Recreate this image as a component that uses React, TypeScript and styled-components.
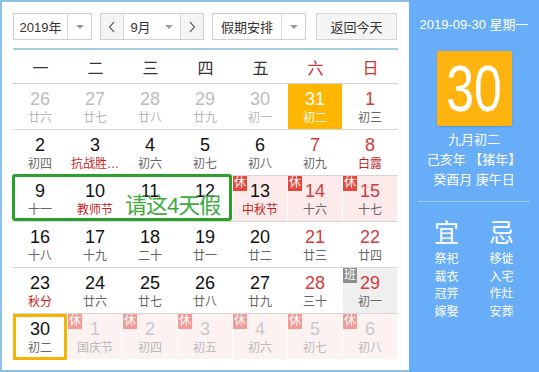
import * as React from "react";
import styled, { createGlobalStyle, css } from "styled-components";

const FONT = `"Liberation Sans", "Noto Sans CJK SC", sans-serif`;

const GlobalStyle = createGlobalStyle`
  body {
    margin: 0;
    background: #fff;
    font-family: ${FONT};
  }
`;

type Kind = "normal" | "other" | "hover" | "rest" | "restOther" | "work" | "today";

type Day = {
  d: number;
  l: string;
  kind?: Kind;
  red?: boolean; // weekend number colour
  fest?: boolean; // lunar line is a festival / solar term
};

const weeks: Day[][] = [
  [
    { d: 26, l: "廿六", kind: "other" },
    { d: 27, l: "廿七", kind: "other" },
    { d: 28, l: "廿八", kind: "other" },
    { d: 29, l: "廿九", kind: "other" },
    { d: 30, l: "初一", kind: "other" },
    { d: 31, l: "初二", kind: "hover" },
    { d: 1, l: "初三", red: true },
  ],
  [
    { d: 2, l: "初四" },
    { d: 3, l: "抗战胜…", fest: true },
    { d: 4, l: "初六" },
    { d: 5, l: "初七" },
    { d: 6, l: "初八" },
    { d: 7, l: "初九", red: true },
    { d: 8, l: "白露", red: true, fest: true },
  ],
  [
    { d: 9, l: "十一" },
    { d: 10, l: "教师节", fest: true },
    { d: 11, l: "" },
    { d: 12, l: "" },
    { d: 13, l: "中秋节", kind: "rest", fest: true },
    { d: 14, l: "十六", kind: "rest", red: true },
    { d: 15, l: "十七", kind: "rest", red: true },
  ],
  [
    { d: 16, l: "十八" },
    { d: 17, l: "十九" },
    { d: 18, l: "二十" },
    { d: 19, l: "廿一" },
    { d: 20, l: "廿二" },
    { d: 21, l: "廿三", red: true },
    { d: 22, l: "廿四", red: true },
  ],
  [
    { d: 23, l: "秋分", fest: true },
    { d: 24, l: "廿六" },
    { d: 25, l: "廿七" },
    { d: 26, l: "廿八" },
    { d: 27, l: "廿九" },
    { d: 28, l: "三十", red: true },
    { d: 29, l: "初一", kind: "work", red: true },
  ],
  [
    { d: 30, l: "初二", kind: "today" },
    { d: 1, l: "国庆节", kind: "restOther" },
    { d: 2, l: "初四", kind: "restOther" },
    { d: 3, l: "初五", kind: "restOther" },
    { d: 4, l: "初六", kind: "restOther" },
    { d: 5, l: "初七", kind: "restOther" },
    { d: 6, l: "初八", kind: "restOther" },
  ],
];

const weekdays = ["一", "二", "三", "四", "五", "六", "日"];

const Frame = styled.div`
  display: flex;
  width: 539px;
  height: 372px;
`;

const CalendarPane = styled.div`
  width: 409px;
  height: 372px;
  box-sizing: border-box;
  border: 2px solid #8cc0e4;
  border-right: none;
  padding: 11px 11px 0 11px;
`;

const Toolbar = styled.div`
  display: flex;
  height: 27px;
  font-size: 13px;
  color: #333;
`;

const Control = styled.div<{ $w: number; $ml?: number }>`
  display: flex;
  width: ${(p) => p.$w}px;
  margin-left: ${(p) => p.$ml || 0}px;
  height: 27px;
  box-sizing: border-box;
  border: 1px solid #cfcfcf;
  background: #fff;
`;

const Label = styled.div`
  flex: 1;
  display: flex;
  align-items: center;
  justify-content: center;
`;

const Arrow = styled.div<{ $line?: boolean }>`
  width: 23px;
  display: flex;
  align-items: center;
  justify-content: center;
  border-left: ${(p) => (p.$line ? "1px solid #dcdcdc" : "none")};
  &::after {
    content: "";
    border-left: 4px solid transparent;
    border-right: 4px solid transparent;
    border-top: 4px solid #9a9a9a;
  }
`;

const Nav = styled.div<{ $side: "l" | "r" }>`
  width: 22px;
  display: flex;
  align-items: center;
  justify-content: center;
  background: #f4f4f4;
  ${(p) => (p.$side === "l" ? "border-right: 1px solid #dcdcdc;" : "border-left: 1px solid #dcdcdc;")}
  svg {
    display: block;
  }
`;

const TodayButton = styled.div`
  margin-left: 10px;
  width: 81px;
  height: 27px;
  box-sizing: border-box;
  border: 1px solid #d4d4d4;
  background: #f5f5f5;
  display: flex;
  align-items: center;
  justify-content: center;
`;

const ToolbarRule = styled.div`
  margin-top: 8px;
  border-bottom: 2px solid #8cbfe0;
  opacity: 0.8;
`;

const WeekHeader = styled.div`
  display: grid;
  grid-template-columns: repeat(7, 55px);
  height: 33px;
  border-bottom: 1px solid #d0d0d0;
`;

const WeekDay = styled.div<{ $red?: boolean }>`
  display: flex;
  align-items: center;
  justify-content: center;
  font-size: 16px;
  color: ${(p) => (p.$red ? "#cc3333" : "#333")};
`;

const Week = styled.div<{ $last?: boolean }>`
  position: relative;
  display: grid;
  grid-template-columns: repeat(7, 55px);
  height: 45px;
  border-bottom: 1px solid ${(p) => (p.$last ? "transparent" : "#d6d6d6")};
`;

const cellBg: Record<Kind, string> = {
  normal: "transparent",
  other: "transparent",
  hover: "#ffb600",
  rest: "#fdeaea",
  restOther: "#fdf2f2",
  work: "#efefef",
  today: "transparent",
};

const Cell = styled.div<{ $kind: Kind }>`
  position: relative;
  box-sizing: border-box;
  margin-right: 1px;
  background: ${(p) => cellBg[p.$kind]};
  text-align: center;
  padding-top: 5px;
  ${(p) =>
    p.$kind === "today" &&
    css`
      margin: 0 1px -1px 0;
      padding-top: 2px;
      border: 3px solid #f5b402;
    `}
`;

const Num = styled.div<{ $color: string }>`
  font-size: 18px;
  line-height: 20px;
  color: ${(p) => p.$color};
`;

const Lunar = styled.div<{ $color: string }>`
  margin-top: 1px;
  font-size: 12px;
  line-height: 16px;
  color: ${(p) => p.$color};
  white-space: nowrap;
`;

const Badge = styled.span<{ $tone: string }>`
  position: absolute;
  left: 0;
  top: 0;
  width: 14px;
  height: 15px;
  background: ${(p) => p.$tone};
  color: #fff;
  font-size: 12px;
  line-height: 15px;
  text-align: center;
`;

const PickBox = styled.div`
  position: absolute;
  left: -1px;
  top: -2px;
  width: 220px;
  height: 47px;
  box-sizing: border-box;
  border: 3px solid #2ba02b;
  border-radius: 3px;
  pointer-events: none;
`;

const PickText = styled.span`
  position: absolute;
  left: 110px;
  top: 15px;
  font-size: 22px;
  line-height: 28px;
  letter-spacing: -1px;
  color: #3fab3f;
  white-space: nowrap;
`;

const SidePanel = styled.div`
  width: 130px;
  height: 372px;
  background: #67adf8;
  color: #fff;
  display: flex;
  flex-direction: column;
  align-items: center;
  padding-top: 17px;
  box-sizing: border-box;
`;

const SideDate = styled.div`
  font-size: 13px;
  line-height: 16px;
  white-space: nowrap;
`;

const BigDay = styled.div`
  margin-top: 18px;
  width: 75px;
  height: 75px;
  background: #ffb30f;
  border-radius: 2px;
  box-shadow: 0 1px 2px rgba(0, 0, 0, 0.15);
  display: flex;
  align-items: center;
  justify-content: center;
  span {
    display: inline-block;
    font-size: 50px;
    line-height: 50px;
    transform: scale(1, 1.28);
  }
`;

const LunarInfo = styled.div`
  margin-top: 4px;
  font-size: 13px;
  line-height: 20px;
  text-align: center;
  white-space: nowrap;
`;

const SideRule = styled.div`
  align-self: stretch;
  margin: 11px 9px 0;
  border-bottom: 1px solid #9fcbf9;
`;

const Advice = styled.div`
  display: grid;
  grid-template-columns: 55px 55px;
  margin-top: 16px;
`;

const AdviceCol = styled.div`
  text-align: center;
`;

const AdviceHead = styled.div`
  font-size: 25px;
  line-height: 30px;
  margin-bottom: 3px;
`;

const AdviceItem = styled.div`
  font-size: 12px;
  line-height: 17.5px;
`;

const Chevron = ({ left }: { left?: boolean }) => (
  <svg width="8" height="12" viewBox="0 0 8 12">
    <path
      d={left ? "M6 1 L1.5 6 L6 11" : "M2 1 L6.5 6 L2 11"}
      fill="none"
      stroke="#666"
      strokeWidth="1.2"
    />
  </svg>
);

const numColor = (day: Day) => {
  if (day.kind === "hover") return "#fff";
  if (day.kind === "other") return "#bdbdbd";
  if (day.kind === "restOther") return "#c9c9c9";
  return day.red ? "#d23b3b" : "#111";
};

const lunarColor = (day: Day) => {
  if (day.kind === "hover") return "#fff";
  if (day.kind === "other" || day.kind === "restOther") return "#b8b8b8";
  return day.fest ? "#c41e1e" : "#666";
};

const badgeFor = (kind?: Kind) => {
  if (kind === "rest") return <Badge $tone="#e8463c">休</Badge>;
  if (kind === "restOther") return <Badge $tone="#f29a96">休</Badge>;
  if (kind === "work") return <Badge $tone="#8c8c8c">班</Badge>;
  return null;
};

const App: React.FC = () => {
  return (
    <Frame>
      <GlobalStyle />
      <CalendarPane>
        <Toolbar>
          <Control $w={79}>
            <Label>2019年</Label>
            <Arrow $line />
          </Control>
          <Control $w={104} $ml={8}>
            <Nav $side="l">
              <Chevron left />
            </Nav>
            <Label>9月</Label>
            <Arrow />
            <Nav $side="r">
              <Chevron />
            </Nav>
          </Control>
          <Control $w={94} $ml={8}>
            <Label>假期安排</Label>
            <Arrow $line />
          </Control>
          <TodayButton>返回今天</TodayButton>
        </Toolbar>
        <ToolbarRule />
        <WeekHeader>
          {weekdays.map((w, i) => (
            <WeekDay key={w} $red={i > 4}>
              {w}
            </WeekDay>
          ))}
        </WeekHeader>
        {weeks.map((week, wi) => (
          <Week key={wi} $last={wi === weeks.length - 1}>
            {week.map((day, di) => {
              const kind = day.kind || "normal";
              return (
                <Cell key={di} $kind={kind}>
                  {badgeFor(day.kind)}
                  <Num $color={numColor(day)}>{day.d}</Num>
                  <Lunar $color={lunarColor(day)}>{day.l}</Lunar>
                </Cell>
              );
            })}
            {wi === 2 && (
              <PickBox>
                <PickText>请这4天假</PickText>
              </PickBox>
            )}
          </Week>
        ))}
      </CalendarPane>
      <SidePanel>
        <SideDate>2019-09-30 星期一</SideDate>
        <BigDay>
          <span>30</span>
        </BigDay>
        <LunarInfo>
          九月初二
          <br />
          己亥年 【猪年】
          <br />
          癸酉月 庚午日
        </LunarInfo>
        <SideRule />
        <Advice>
          <AdviceCol>
            <AdviceHead>宜</AdviceHead>
            {["祭祀", "裁衣", "冠笄", "嫁娶"].map((t) => (
              <AdviceItem key={t}>{t}</AdviceItem>
            ))}
          </AdviceCol>
          <AdviceCol>
            <AdviceHead>忌</AdviceHead>
            {["移徙", "入宅", "作灶", "安葬"].map((t) => (
              <AdviceItem key={t}>{t}</AdviceItem>
            ))}
          </AdviceCol>
        </Advice>
      </SidePanel>
    </Frame>
  );
};

export default App;
